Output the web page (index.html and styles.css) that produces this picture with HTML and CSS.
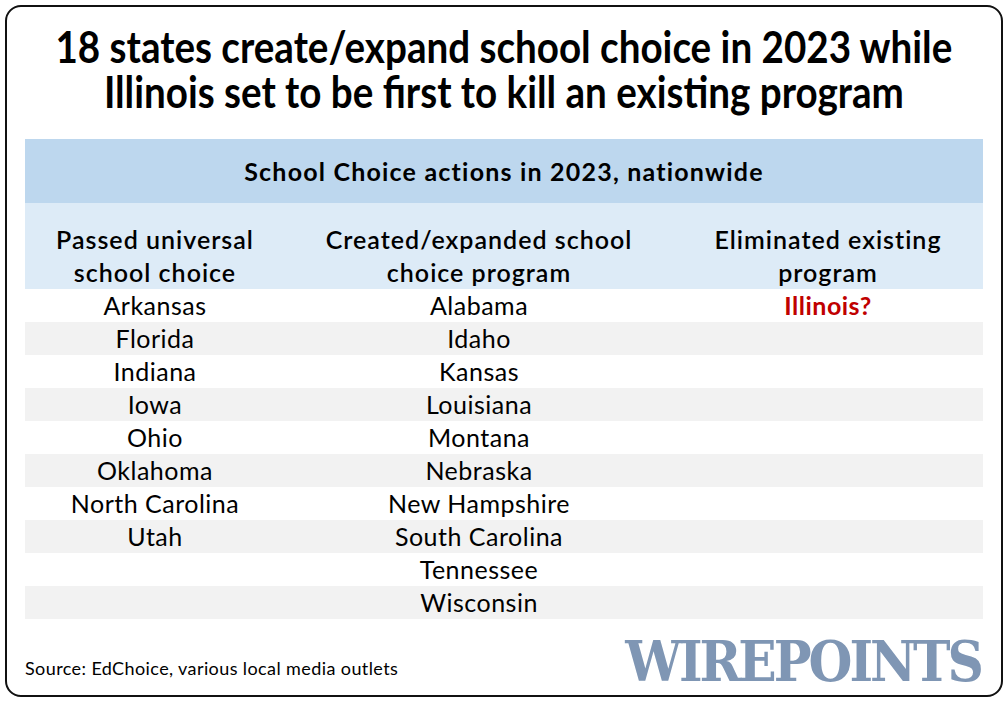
FILE: index.html
```html
<!DOCTYPE html>
<html>
<head>
<meta charset="utf-8">
<link rel="stylesheet" href="styles.css">
</head>
<body>
<div class="card">
  <h1 class="title">18 states create/expand school choice in 2023 while<br>Illinois set to be first to kill an existing program</h1>
  <div class="table">
    <div class="band">School Choice actions in 2023, nationwide</div>
    <div class="heads">
      <div class="c1">Passed universal<br>school choice</div>
      <div class="c2">Created/expanded school<br>choice program</div>
      <div class="c3">Eliminated existing<br>program</div>
    </div>
    <div class="row"><div class="c1">Arkansas</div><div class="c2">Alabama</div><div class="c3 red">Illinois?</div></div>
    <div class="row alt"><div class="c1">Florida</div><div class="c2">Idaho</div><div class="c3"></div></div>
    <div class="row"><div class="c1">Indiana</div><div class="c2">Kansas</div><div class="c3"></div></div>
    <div class="row alt"><div class="c1">Iowa</div><div class="c2">Louisiana</div><div class="c3"></div></div>
    <div class="row"><div class="c1">Ohio</div><div class="c2">Montana</div><div class="c3"></div></div>
    <div class="row alt"><div class="c1">Oklahoma</div><div class="c2">Nebraska</div><div class="c3"></div></div>
    <div class="row"><div class="c1">North Carolina</div><div class="c2">New Hampshire</div><div class="c3"></div></div>
    <div class="row alt"><div class="c1">Utah</div><div class="c2">South Carolina</div><div class="c3"></div></div>
    <div class="row"><div class="c1"></div><div class="c2">Tennessee</div><div class="c3"></div></div>
    <div class="row alt"><div class="c1"></div><div class="c2">Wisconsin</div><div class="c3"></div></div>
  </div>
  <div class="footer">
    <div class="source">Source: EdChoice, various local media outlets</div>
    <div class="logo">WIREPOINTS</div>
  </div>
</div>
</body>
</html>
```
FILE: styles.css
```css
html, body {
  margin: 0;
  padding: 0;
  background: #fff;
}
body {
  font-family: "Lato", "Noto Sans", sans-serif;
  color: #000;
}
.card {
  box-sizing: border-box;
  margin: 5px 0 0 5px;
  width: 998px;
  height: 692px;
  border: 2px solid #111;
  border-radius: 16px;
  padding: 0 18px 0 18px;
  display: flex;
  flex-direction: column;
}
.title {
  align-self: center;
  margin: 17px 0 0 0;
  font-family: "Lato", sans-serif;
  font-weight: 700;
  font-size: 43px;
  line-height: 45px;
  text-align: center;
  transform: scaleX(0.897);
  white-space: nowrap;
}
.table {
  margin-top: 25px;
  width: 958px;
  font-size: 25px;
  letter-spacing: 0.5px;
}
.band {
  height: 64px;
  background: #BDD7EE;
  font-weight: 700;
  letter-spacing: 1.2px;
  display: flex;
  align-items: center;
  justify-content: center;
}
.heads {
  height: 86px;
  background: #DDEBF7;
  display: flex;
  align-items: flex-end;
  line-height: 33px;
  text-align: center;
  font-weight: 600;
  letter-spacing: 1px;
  box-sizing: border-box;
}
.c1 { width: 260px; text-align: center; }
.c2 { width: 388px; text-align: center; }
.c3 { width: 310px; text-align: center; }
.row {
  display: flex;
  height: 33px;
  line-height: 33px;
}
.row.alt { background: #F2F2F2; }
.red { color: #C00000; font-weight: 700; }
.footer {
  margin-top: auto;
  display: flex;
  justify-content: space-between;
  align-items: flex-end;
  padding: 0 2px 12px 0;
}
.source {
  font-size: 18px;
  letter-spacing: 0.4px;
  padding-bottom: 4px;
}
.logo {
  font-family: "DejaVu Serif", serif;
  font-stretch: condensed;
  font-weight: 700;
  font-size: 56px;
  line-height: 44px;
  color: #7F96B4;
  letter-spacing: -3px;
}
```
